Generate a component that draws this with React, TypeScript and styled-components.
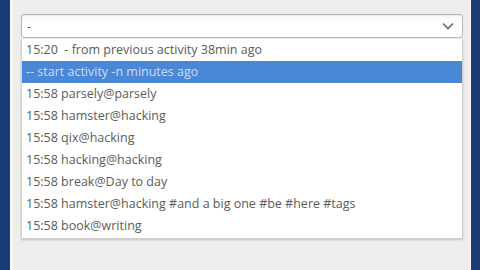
import React from "react";
import styled, { createGlobalStyle } from "styled-components";

const Global = createGlobalStyle`
  html, body { margin: 0; padding: 0; width: 480px; height: 270px; overflow: hidden; }
  body { font-family: "Open Sans", "Noto Sans", sans-serif; }
`;

const Desktop = styled.div`
  width: 480px;
  height: 270px;
  background: #1b3c72;
  display: flex;
  padding: 0 9px 0 10px;
  box-sizing: border-box;
`;

const Window = styled.div`
  flex: 1;
  background: #ededec;
  border-left: 3px solid #f6f6f6;
  border-right: 2px solid #f4f4f4;
  padding: 14px 6px 0 8px;
  display: flex;
  flex-direction: column;
`;

const Entry = styled.div`
  height: 24px;
  box-sizing: border-box;
  border: 1px solid #b7b8b6;
  border-radius: 3px;
  background: linear-gradient(#f6f6f5, #ffffff 40%);
  box-shadow: inset 0 1px 1px rgba(0, 0, 0, 0.06);
  display: flex;
  align-items: center;
  justify-content: space-between;
  padding: 0 8px 0 5px;
  color: #555;
  font-size: 12.5px;
`;

const List = styled.div`
  margin-top: 1px;
  background: #fff;
  border: 1px solid #d0d0ce;
  border-top: none;
  box-shadow: 0 1px 2px rgba(0, 0, 0, 0.18);
  display: flex;
  flex-direction: column;
  padding-bottom: 1px;
`;

const Row = styled.div<{ $sel?: boolean }>`
  height: 22px;
  line-height: 22px;
  padding-left: 4px;
  font-size: 12.5px;
  white-space: pre;
  color: ${(p) => (p.$sel ? "#c9dcf5" : "#5a5c58")};
  background: ${(p) => (p.$sel ? "#4a87d6" : "transparent")};
`;

const rows = [
  "15:20  - from previous activity 38min ago",
  "-- start activity -n minutes ago",
  "15:58 parsely@parsely",
  "15:58 hamster@hacking",
  "15:58 qix@hacking",
  "15:58 hacking@hacking",
  "15:58 break@Day to day",
  "15:58 hamster@hacking #and a big one #be #here #tags",
  "15:58 book@writing",
];

export default function App() {
  return (
    <>
      <Global />
      <Desktop>
        <Window>
          <Entry>
            <span>-</span>
            <svg width="12" height="8" viewBox="0 0 12 8">
              <path d="M1 1.5 L6 6.5 L11 1.5" fill="none" stroke="#6a6a6a" strokeWidth="1.6" />
            </svg>
          </Entry>
          <List>
            {rows.map((r, i) => (
              <Row key={i} $sel={i === 1}>
                {r}
              </Row>
            ))}
          </List>
        </Window>
      </Desktop>
    </>
  );
}
